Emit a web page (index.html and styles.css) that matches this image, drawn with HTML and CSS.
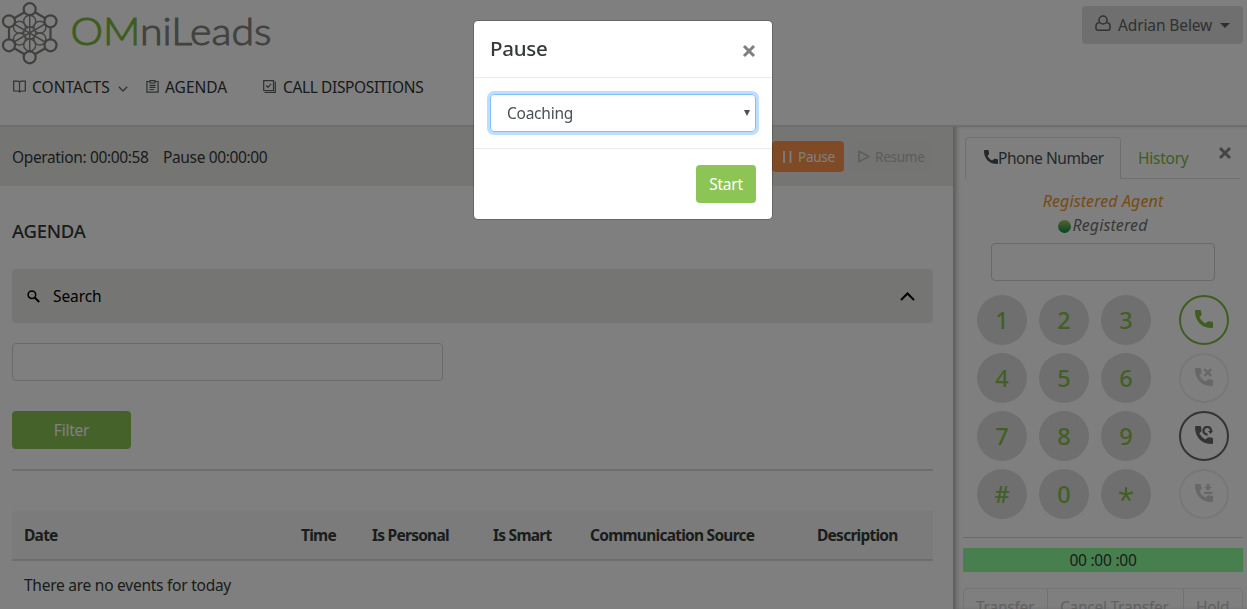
FILE: index.html
```
<!DOCTYPE html>
<html lang="en">
<head>
<meta charset="utf-8">
<title>OMniLeads</title>
<link rel="stylesheet" href="styles.css">
</head>
<body>
<svg class="defs" width="0" height="0">
  <symbol id="handset" viewBox="0 0 18 18"><path d="M1 0H5Q6 0 6.1 1L6.5 4.4Q6.6 5.2 6 5.8L4.4 7.6Q6.6 11.6 10.4 13.6L12.4 11.8Q13 11.2 13.8 11.3L17 11.7Q18 11.8 18 12.8V17Q18 18 17 18Q9.5 18 4.6 13.4Q0 8.5 0 1Q0 0 1 0Z"/></symbol>
</svg>
<header class="top">
  <div class="brand-row">
    <svg class="logo" width="280" height="68" viewBox="0 0 280 68">
      <g fill="none" stroke="#8a8a86" stroke-width="1.5">
        <circle cx="29.7" cy="33" r="6"/><circle cx="29.7" cy="21.3" r="6"/><circle cx="39.9" cy="27.2" r="6"/><circle cx="39.9" cy="39" r="6"/><circle cx="29.7" cy="45" r="6"/><circle cx="19.5" cy="39" r="6"/><circle cx="19.5" cy="27.2" r="6"/>
        <path d="M29.7 15V51M14 24L45 42M14 42L45 24"/>
      </g>
      <g fill="none" stroke="#80807c" stroke-width="2.2">
        <path d="M24.5 12.3L14.2 18.3M35 12.3L45.3 18.3M9 27.5V39M50.5 27.5V39M14.2 48.3L24.5 54.3M45.3 48.3L35 54.3"/>
        <circle cx="29.7" cy="9.2" r="6"/><circle cx="50.5" cy="21.3" r="6"/><circle cx="50.5" cy="45.3" r="6"/><circle cx="29.7" cy="57.3" r="6"/><circle cx="9" cy="45.3" r="6"/><circle cx="9" cy="21.3" r="6"/>
      </g>
      <text class="logo-text" x="70.5" y="45.3" textLength="201" lengthAdjust="spacingAndGlyphs"><tspan class="logo-om">OM</tspan>niLeads</text>
    </svg>
    <button class="user">
      <svg width="16" height="17" viewBox="0 0 16 17" fill="none" stroke="currentColor" stroke-width="1.5"><circle cx="8" cy="5" r="4"/><path d="M4.8 7.6Q1 8 1 11V13.5Q1 15.2 3 15.2H13Q15 15.2 15 13.5V11Q15 8 11.2 7.6"/></svg>
      <span class="t-user">Adrian Belew</span><i class="caret"></i>
    </button>
  </div>
  <nav class="menu">
    <a class="m1"><svg width="13" height="13" viewBox="0 0 13 13" fill="none" stroke="currentColor" stroke-width="1.2"><path d="M.7 1.2H5L6.5 2L8 1.2H12.3V11H8L6.5 12L5 11H.7ZM6.5 2V12"/></svg><span class="t-contacts">CONTACTS</span><svg class="chev" width="10" height="6" viewBox="0 0 10 6" fill="none" stroke="currentColor" stroke-width="1.3"><path d="M.8.8L5 5L9.2.8"/></svg></a>
    <a class="m2"><svg width="13" height="13" viewBox="0 0 13 13" fill="none" stroke="currentColor" stroke-width="1.2"><path d="M4 1.5H.9V12.2H12.1V1.5H9M4 .7H9V3H4ZM3.5 5.3H9.5M3.5 7.4H9.5M3.5 9.5H8"/></svg><span class="t-agenda">AGENDA</span></a>
    <a class="m3"><svg width="13" height="13" viewBox="0 0 13 13" fill="none" stroke="currentColor" stroke-width="1.2"><path d="M.7.7H10.5V10.5H.7ZM12.3 1.5V12.3H1.5M3.2 5.5L5 7.3L8 3.8"/></svg><span class="t-calls">CALL DISPOSITIONS</span></a>
  </nav>
</header>
<div class="columns">
  <main class="main">
    <div class="agentbar">
      <span class="clock t-op">Operation: 00:00:58</span><span class="clock t-pz">Pause 00:00:00</span>
      <div class="bar-actions">
        <button class="btn-pause"><svg width="9" height="12" viewBox="0 0 9 12"><path d="M1 0V12M7.5 0V12" stroke="currentColor" stroke-width="1.7"/></svg><span>Pause</span></button>
        <button class="btn-resume"><svg width="12" height="13" viewBox="0 0 12 13" fill="none" stroke="currentColor" stroke-width="1.5"><path d="M1 1.3V11.7L11 6.5Z"/></svg><span>Resume</span></button>
      </div>
    </div>
    <section class="content">
      <h1>AGENDA</h1>
      <div class="search"><svg width="13" height="13" viewBox="0 0 13 13" fill="none" stroke="#000"><circle cx="4.9" cy="4.7" r="3.8" stroke-width="1.5"/><path d="M7.7 7.5L12.2 12" stroke-width="2"/></svg><span class="t-search">Search</span><svg class="up" width="15" height="9" viewBox="0 0 15 9" fill="none" stroke="#000" stroke-width="2"><path d="M1 8L7.5 1.5L14 8"/></svg></div>
      <div class="field"></div>
      <button class="filter">Filter</button>
      <hr>
      <table>
        <colgroup><col class="c1"><col class="c2"><col class="c3"><col class="c4"><col class="c5"><col class="c6"></colgroup>
        <thead><tr><th>Date</th><th>Time</th><th>Is Personal</th><th>Is Smart</th><th>Communication Source</th><th>Description</th></tr></thead>
        <tbody><tr><td colspan="6">There are no events for today</td></tr></tbody>
      </table>
    </section>
  </main>
  <aside class="phone">
    <div class="tabs"><div class="tab on"><svg width="14" height="14" fill="currentColor"><use href="#handset"/></svg><span class="t-phone">Phone Number</span></div><div class="tab hist">History</div><svg class="close" width="14" height="14" viewBox="0 0 14 14"><path d="M2 2L12 12M12 2L2 12" stroke="#8a8a8a" stroke-width="3"/></svg></div>
    <div class="status"><em class="agent">Registered Agent</em><div class="reg"><i class="dot"></i><em>Registered</em></div></div>
    <div class="number"></div>
    <div class="pad">
      <b>1</b><b>2</b><b>3</b><span class="ring call"><svg width="18" height="18" fill="currentColor"><use href="#handset"/></svg></span>
      <b>4</b><b>5</b><b>6</b><span class="ring off"><svg width="18" height="18" viewBox="0 0 18 18" fill="currentColor"><use href="#handset" width="18" height="18"/><path d="M9.2 1.2L16.2 8.2M16.2 1.2L9.2 8.2" stroke="currentColor" stroke-width="2.4"/></svg></span>
      <b>7</b><b>8</b><b>9</b><span class="ring dark"><svg width="18" height="18" viewBox="0 0 18 18" fill="currentColor"><use href="#handset" width="18" height="18"/><path d="M16 5.2A3.8 3.8 0 1 0 12.5 8.5" fill="none" stroke="currentColor" stroke-width="2.3"/><path d="M13 5H18L15.6 8Z"/></svg></span>
      <b>#</b><b>0</b><b><svg width="14" height="14" viewBox="0 0 14 14" stroke="currentColor" stroke-width="2.2"><path d="M7 7.5V.3M7 7.5L.2 5.3M7 7.5L13.8 5.3M7 7.5L3 13.5M7 7.5L11 13.5"/></svg></b><span class="ring off"><svg width="18" height="18" viewBox="0 0 18 18" fill="currentColor"><use href="#handset" width="18" height="18"/><path d="M11.4 0H14.6V3H17L13 6.8L9 3H11.4ZM9 7.7H17.5V10H9Z"/></svg></span>
    </div>
    <div class="timer">00 :00 :00</div>
    <div class="group"><span>Transfer</span><span>Cancel Transfer</span><span>Hold</span></div>
  </aside>
</div>
<div class="backdrop">
  <div class="modal">
    <div class="modal-head"><h2>Pause</h2><svg width="14" height="14" viewBox="0 0 14 14"><path d="M2 2L12 12M12 2L2 12" stroke="#7f7f7f" stroke-width="3"/></svg></div>
    <div class="modal-body"><div class="select"><span>Coaching</span><svg width="6" height="6" viewBox="0 0 6 6"><path d="M0 0H6L3 6Z" fill="#495057"/></svg></div></div>
    <div class="modal-foot"><button class="start">Start</button></div>
  </div>
</div>
</body>
</html>
```
FILE: styles.css
```
* { box-sizing: border-box; }
body { margin: 0; height: 609px; overflow: hidden; background: #fff; color: #343a38; font: 15.5px/24px "Noto Sans", sans-serif; letter-spacing: -.25px; }
button { font: inherit; letter-spacing: inherit; border: 0; padding: 0; border-radius: 4px; display: flex; align-items: center; }
svg { flex: none; display: block; }
span, em, th, td, h1, h2 { white-space: nowrap; }
.defs { position: absolute; }

.top { height: 127px; border-bottom: 2px solid #dcdcdc; }
.brand-row { display: flex; justify-content: space-between; height: 70px; }
.logo-text { font: 300 36.5px Lato, sans-serif; letter-spacing: 0; fill: #84847e; stroke: #84847e; stroke-width: 1; }
.logo-om { fill: #7fb941; stroke: #7fb941; }
.user { width: 161px; height: 38px; margin: 6px 4px 0 0; padding: 0 6px 0 13px; background: #dedede; color: #606462; }
.user svg { margin-top: -4px; }
.t-user { width: 95px; margin-left: 7px; text-align: left; letter-spacing: -.12px; }
.caret { width: 0; margin-left: 7px; border: 5px solid transparent; border-top-color: #5c605e; border-bottom: 0; }
.menu { display: flex; height: 33px; padding-left: 13px; color: #5d6460; }
.menu a { display: flex; align-items: center; }
.menu span { color: #303634; margin-left: 6px; }
.menu .t-calls { margin-left: 7px; letter-spacing: -.37px; }
.m1 { width: 133px; }
.m2 { width: 117px; }
.menu .t-contacts { width: 79px; letter-spacing: .05px; }
.t-agenda { letter-spacing: 0; }
.chev { margin: 4px 0 0 7px; }

.columns { display: flex; height: 482px; }
.main { width: 953px; }
.agentbar { display: flex; align-items: center; height: 59px; padding: 0 20px 0 12px; background: #ebebe7; }
.clock { letter-spacing: -.36px; }
.t-op { width: 151px; }
.bar-actions { display: flex; gap: 5px; margin-left: auto; }
.bar-actions button { height: 31px; font-size: 13.5px; }
.btn-pause { width: 72px; padding-left: 11px; gap: 6px; background: #ff964c; color: #fff; }
.btn-resume { width: 84px; padding-left: 9px; gap: 5px; background: #e8e8e5; color: #b8bab8; }

.content { padding: 32px 20px 0 12px; }
h1 { margin: 0; font-size: 18.5px; line-height: 25px; font-weight: 500; }
.search { display: flex; align-items: center; height: 54px; margin-top: 26px; padding: 0 18px 0 15px; border-radius: 4px; background: #ebebe7; color: #000; }
.t-search { margin-left: 13px; letter-spacing: -.1px; }
.up { margin-left: auto; }
.field { width: 431px; height: 38px; margin-top: 20px; border: 1px solid #ced4da; border-radius: 4px; }
.filter { justify-content: center; width: 119px; height: 38px; margin-top: 30px; background: #8cc556; color: #fff; }
hr { height: 2px; margin: 20px 0 40px; border: 0; background: #dcdcdc; }
table { width: 921px; border-collapse: separate; border-spacing: 0; table-layout: fixed; }
th { height: 50px; padding: 0 0 0 12px; text-align: left; font-weight: 700; font-size: 15.5px; letter-spacing: -.75px; background: #f7f7f7; border-bottom: 2px solid #dcdcdc; }
td { height: 48px; padding: 0 12px 1px; }
.c1 { width: 277px; }
.c2 { width: 71px; }
.c3 { width: 121px; }
.c4 { width: 97px; }
.c5 { width: 227px; }

.phone { width: 294px; padding: 10px 4px 0 10px; box-shadow: inset 5px 0 5px -2px #b4b4b4; }
.tabs { display: flex; height: 42px; margin: 0 3px 0 2px; }
.tab { display: flex; align-items: center; border-bottom: 1px solid #dadfe3; }
.tab.on { width: 156px; padding: 0 0 1px 18px; border: 1px solid #dadfe3; border-bottom: 0; border-radius: 4px 4px 0 0; color: #495057; }
.tab.on svg { margin-top: -3px; }
.t-phone { letter-spacing: -.45px; }
.tab.hist { flex: 1; padding: 1px 0 0 17px; color: #80ba42; }
.close { margin: 9px 8px 0 -22px; }
.status { display: flex; flex-direction: column; align-items: center; padding-top: 10px; color: #6f7472; font-size: 16px; letter-spacing: .1px; }
.agent { color: #ea962f; }
.reg { display: flex; align-items: center; }
.dot { width: 13px; height: 13px; border-radius: 50%; background: linear-gradient(#a8c653, #009048); margin: 2px 1px 0 0; }
.number { width: 224px; height: 38px; margin: 6px 0 0 28px; border: 1px solid #ced4da; border-radius: 4px; }
.pad { display: grid; grid-template-columns: 50px 50px 50px 50px; column-gap: 12px; row-gap: 8px; margin: 14px 0 0 14px; }
.pad b { display: flex; align-items: center; justify-content: center; height: 50px; border-radius: 50%; background: #dedede; color: #86bf4d; font-size: 23.5px; font-weight: 500; letter-spacing: 0; }
.ring { display: flex; align-items: center; justify-content: center; width: 50px; height: 50px; margin-left: 16px; border: 2px solid; border-radius: 50%; padding-bottom: 2px; }
.call { color: #80ba42; }
.off { border-color: #efefef; color: #cfcfcf; }
.dark { color: #646a67; }
.timer { margin-top: 18px; padding-top: 10px; border-top: 1px solid #d5d5d5; text-align: center; line-height: 24px; background: linear-gradient(#8eff9f, #8eff9f) 0 10px / 100% 24px no-repeat; }
.group { display: flex; height: 38px; margin-top: 16px; border: 1px solid #e8e8e8; border-radius: 4px; color: #c2c2c2; }
.group span { padding: 6px 0 0 12px; border-right: 1px solid #e3e3e3; }
.group span:nth-child(1) { width: 84px; }
.group span:nth-child(2) { width: 136px; }
.group span:nth-child(3) { border: 0; }

.backdrop { position: fixed; inset: 0; background: rgba(0, 0, 0, .5); }
.modal { width: 300px; height: 200px; margin: 20px 0 0 473px; border: 1px solid rgba(0, 0, 0, .2); border-radius: 5px; background: #fff; background-clip: padding-box; }
.modal-head { display: flex; justify-content: space-between; height: 57px; padding: 12px 16px 0; border-bottom: 1px solid #e9ecef; }
.modal-head svg { margin-top: 11px; }
h2 { margin: 0; font-size: 20.5px; line-height: 30px; font-weight: 500; }
.modal-body { height: 70px; padding: 16px; }
.select { display: flex; align-items: center; justify-content: space-between; height: 38px; padding: 0 5px 0 16px; border: 1px solid #80bdff; border-radius: 4px; color: #495057; box-shadow: 0 0 0 3px #bfdeff; }
.modal-foot { display: flex; justify-content: flex-end; padding: 16px; border-top: 1px solid #e9ecef; }
.start { justify-content: center; width: 60px; height: 38px; background: #8cc556; color: #fff; }
```
